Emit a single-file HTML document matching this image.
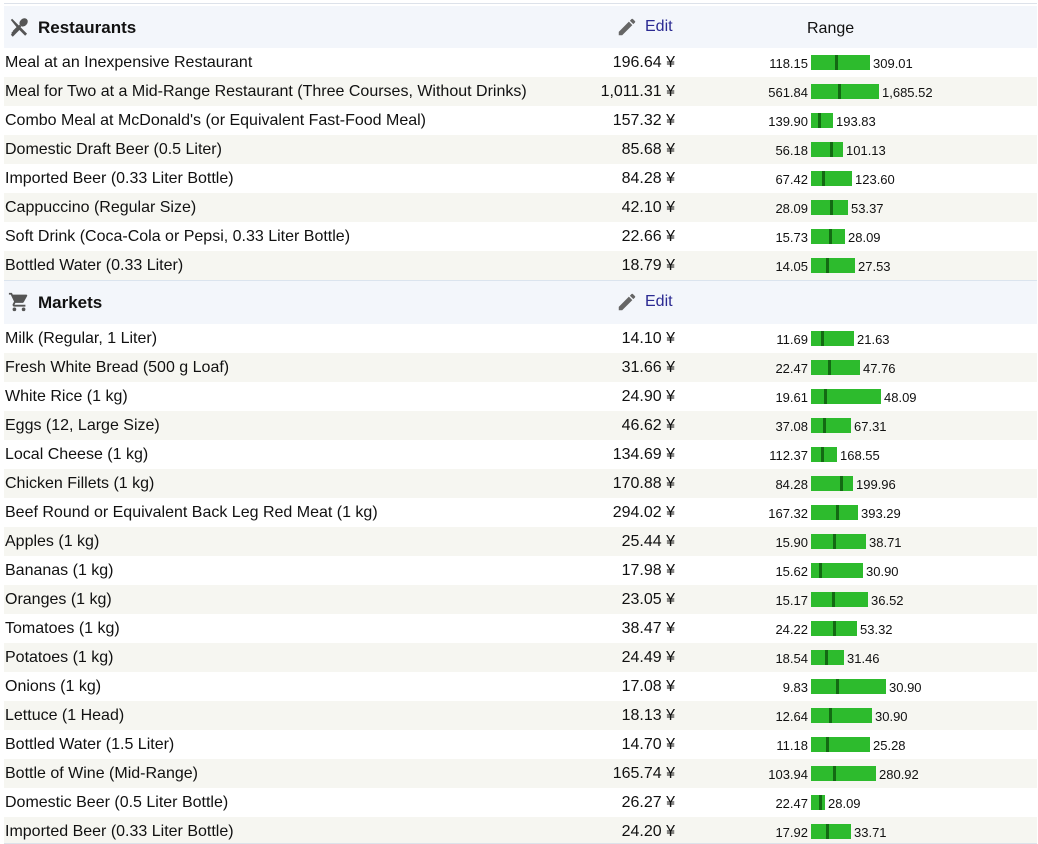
<!DOCTYPE html><html><head><meta charset="utf-8"><style>
body{margin:0;background:#fff;font-family:"Liberation Sans",Arial,sans-serif;color:#111;width:1038px;height:844px;overflow:hidden;position:relative}
.top{position:absolute;left:4px;top:3px;width:1033px;height:1px;background:#dde2ea}
.hd{position:absolute;left:4px;width:1033px;height:42px;background:#f3f6fb}
.hd .t{position:absolute;left:34px;top:12px;font-size:17px;font-weight:bold}
.hd .ic{position:absolute;left:4px;top:10px}
.hd .ed{position:absolute;left:612px;top:10px}
.hd .e{position:absolute;left:641px;top:12px;font-size:16px;color:#2b2a92}
.hd .r{position:absolute;left:803px;top:14px;font-size:16px}
.row{position:absolute;left:4px;width:1033px;height:29px;font-size:16px}
.row.g{background:#f6f6f1}
.n{position:absolute;left:1px;top:6px;white-space:nowrap}
.p{position:absolute;right:362px;top:6px;white-space:nowrap}
.lo{position:absolute;right:229px;top:8px;font-size:13px}
.bar{position:absolute;left:807px;top:7px;height:15px;background:#2dbb2d}
.bar i{position:absolute;top:0;width:3px;height:15px;background:#136a13}
.hi{position:absolute;top:8px;font-size:13px}
</style></head><body>
<div class="top"></div>
<div class="hd" style="top:6px">
<svg class="ic" width="22" height="22" viewBox="0 0 24 24"><path fill="#555" d="M13.2 14.6l-8 8-2.1-2.1 8-8zM3.1 4.4l1.4-1.4 16.3 16.4-2.1 2.1-8-8-4.2 4.2-1.4-1.4 4.2-4.2z"/><ellipse cx="17" cy="7" rx="4" ry="5" transform="rotate(45 17 7)" fill="#555"/><path fill="#555" d="M12.5 9.5l2 2-9 9-2-2z"/></svg>
<span class="t">Restaurants</span>
<svg class="ed" width="22" height="22" viewBox="0 0 24 24"><path fill="#666" d="M3 17.25V21h3.75L17.8 9.94l-3.75-3.75L3 17.25zM20.7 7.04a1 1 0 000-1.41l-2.34-2.34a1 1 0 00-1.41 0l-1.83 1.83 3.75 3.75 1.83-1.83z"/></svg>
<span class="e">Edit</span><span class="r">Range</span></div>

<div class="row" style="top:48px"><span class="n">Meal at an Inexpensive Restaurant</span><span class="p">196.64 ¥</span><span class="lo">118.15</span><div class="bar" style="width:59px"><i style="left:24px"></i></div><span class="hi" style="left:869px">309.01</span></div>
<div class="row g" style="top:77px"><span class="n">Meal for Two at a Mid-Range Restaurant (Three Courses, Without Drinks)</span><span class="p">1,011.31 ¥</span><span class="lo">561.84</span><div class="bar" style="width:68px"><i style="left:27px"></i></div><span class="hi" style="left:878px">1,685.52</span></div>
<div class="row" style="top:106px"><span class="n">Combo Meal at McDonald's (or Equivalent Fast-Food Meal)</span><span class="p">157.32 ¥</span><span class="lo">139.90</span><div class="bar" style="width:22px"><i style="left:7px"></i></div><span class="hi" style="left:832px">193.83</span></div>
<div class="row g" style="top:135px"><span class="n">Domestic Draft Beer (0.5 Liter)</span><span class="p">85.68 ¥</span><span class="lo">56.18</span><div class="bar" style="width:32px"><i style="left:19px"></i></div><span class="hi" style="left:842px">101.13</span></div>
<div class="row" style="top:164px"><span class="n">Imported Beer (0.33 Liter Bottle)</span><span class="p">84.28 ¥</span><span class="lo">67.42</span><div class="bar" style="width:41px"><i style="left:11px"></i></div><span class="hi" style="left:851px">123.60</span></div>
<div class="row g" style="top:193px"><span class="n">Cappuccino (Regular Size)</span><span class="p">42.10 ¥</span><span class="lo">28.09</span><div class="bar" style="width:37px"><i style="left:19px"></i></div><span class="hi" style="left:847px">53.37</span></div>
<div class="row" style="top:222px"><span class="n">Soft Drink (Coca-Cola or Pepsi, 0.33 Liter Bottle)</span><span class="p">22.66 ¥</span><span class="lo">15.73</span><div class="bar" style="width:34px"><i style="left:18px"></i></div><span class="hi" style="left:844px">28.09</span></div>
<div class="row g" style="top:251px"><span class="n">Bottled Water (0.33 Liter)</span><span class="p">18.79 ¥</span><span class="lo">14.05</span><div class="bar" style="width:44px"><i style="left:15px"></i></div><span class="hi" style="left:854px">27.53</span></div>

<div style="position:absolute;left:4px;top:280px;width:1033px;height:1px;background:#dbe4ee"></div>
<div class="hd" style="top:281px;height:43px">
<svg class="ic" width="22" height="22" viewBox="0 0 24 24"><path fill="#555" d="M7 18a2 2 0 100 4 2 2 0 000-4zM1 2v2h2l3.6 7.59-1.35 2.45C5.09 14.32 5 14.65 5 15a2 2 0 002 2h12v-2H7.42a.25.25 0 01-.25-.25l.03-.12.9-1.63h7.45c.75 0 1.41-.41 1.75-1.03l3.58-6.49A1 1 0 0020 4H5.21l-.94-2H1zm16 16a2 2 0 100 4 2 2 0 000-4z"/></svg>
<span class="t">Markets</span>
<svg class="ed" width="22" height="22" viewBox="0 0 24 24"><path fill="#666" d="M3 17.25V21h3.75L17.8 9.94l-3.75-3.75L3 17.25zM20.7 7.04a1 1 0 000-1.41l-2.34-2.34a1 1 0 00-1.41 0l-1.83 1.83 3.75 3.75 1.83-1.83z"/></svg>
<span class="e">Edit</span></div>

<div class="row" style="top:324px"><span class="n">Milk (Regular, 1 Liter)</span><span class="p">14.10 ¥</span><span class="lo">11.69</span><div class="bar" style="width:43px"><i style="left:10px"></i></div><span class="hi" style="left:853px">21.63</span></div>
<div class="row g" style="top:353px"><span class="n">Fresh White Bread (500 g Loaf)</span><span class="p">31.66 ¥</span><span class="lo">22.47</span><div class="bar" style="width:49px"><i style="left:17px"></i></div><span class="hi" style="left:859px">47.76</span></div>
<div class="row" style="top:382px"><span class="n">White Rice (1 kg)</span><span class="p">24.90 ¥</span><span class="lo">19.61</span><div class="bar" style="width:70px"><i style="left:13px"></i></div><span class="hi" style="left:880px">48.09</span></div>
<div class="row g" style="top:411px"><span class="n">Eggs (12, Large Size)</span><span class="p">46.62 ¥</span><span class="lo">37.08</span><div class="bar" style="width:40px"><i style="left:12px"></i></div><span class="hi" style="left:850px">67.31</span></div>
<div class="row" style="top:440px"><span class="n">Local Cheese (1 kg)</span><span class="p">134.69 ¥</span><span class="lo">112.37</span><div class="bar" style="width:26px"><i style="left:10px"></i></div><span class="hi" style="left:836px">168.55</span></div>
<div class="row g" style="top:469px"><span class="n">Chicken Fillets (1 kg)</span><span class="p">170.88 ¥</span><span class="lo">84.28</span><div class="bar" style="width:42px"><i style="left:29px"></i></div><span class="hi" style="left:852px">199.96</span></div>
<div class="row" style="top:498px"><span class="n">Beef Round or Equivalent Back Leg Red Meat (1 kg)</span><span class="p">294.02 ¥</span><span class="lo">167.32</span><div class="bar" style="width:47px"><i style="left:25px"></i></div><span class="hi" style="left:857px">393.29</span></div>
<div class="row g" style="top:527px"><span class="n">Apples (1 kg)</span><span class="p">25.44 ¥</span><span class="lo">15.90</span><div class="bar" style="width:55px"><i style="left:22px"></i></div><span class="hi" style="left:865px">38.71</span></div>
<div class="row" style="top:556px"><span class="n">Bananas (1 kg)</span><span class="p">17.98 ¥</span><span class="lo">15.62</span><div class="bar" style="width:52px"><i style="left:8px"></i></div><span class="hi" style="left:862px">30.90</span></div>
<div class="row g" style="top:585px"><span class="n">Oranges (1 kg)</span><span class="p">23.05 ¥</span><span class="lo">15.17</span><div class="bar" style="width:57px"><i style="left:21px"></i></div><span class="hi" style="left:867px">36.52</span></div>
<div class="row" style="top:614px"><span class="n">Tomatoes (1 kg)</span><span class="p">38.47 ¥</span><span class="lo">24.22</span><div class="bar" style="width:46px"><i style="left:22px"></i></div><span class="hi" style="left:856px">53.32</span></div>
<div class="row g" style="top:643px"><span class="n">Potatoes (1 kg)</span><span class="p">24.49 ¥</span><span class="lo">18.54</span><div class="bar" style="width:33px"><i style="left:14px"></i></div><span class="hi" style="left:843px">31.46</span></div>
<div class="row" style="top:672px"><span class="n">Onions (1 kg)</span><span class="p">17.08 ¥</span><span class="lo">9.83</span><div class="bar" style="width:75px"><i style="left:25px"></i></div><span class="hi" style="left:885px">30.90</span></div>
<div class="row g" style="top:701px"><span class="n">Lettuce (1 Head)</span><span class="p">18.13 ¥</span><span class="lo">12.64</span><div class="bar" style="width:61px"><i style="left:18px"></i></div><span class="hi" style="left:871px">30.90</span></div>
<div class="row" style="top:730px"><span class="n">Bottled Water (1.5 Liter)</span><span class="p">14.70 ¥</span><span class="lo">11.18</span><div class="bar" style="width:59px"><i style="left:15px"></i></div><span class="hi" style="left:869px">25.28</span></div>
<div class="row g" style="top:759px"><span class="n">Bottle of Wine (Mid-Range)</span><span class="p">165.74 ¥</span><span class="lo">103.94</span><div class="bar" style="width:65px"><i style="left:22px"></i></div><span class="hi" style="left:875px">280.92</span></div>
<div class="row" style="top:788px"><span class="n">Domestic Beer (0.5 Liter Bottle)</span><span class="p">26.27 ¥</span><span class="lo">22.47</span><div class="bar" style="width:14px"><i style="left:8px"></i></div><span class="hi" style="left:824px">28.09</span></div>
<div class="row g" style="top:817px;height:26px"><span class="n">Imported Beer (0.33 Liter Bottle)</span><span class="p">24.20 ¥</span><span class="lo">17.92</span><div class="bar" style="width:40px"><i style="left:15px"></i></div><span class="hi" style="left:850px">33.71</span></div>
<div style="position:absolute;left:4px;top:843px;width:1033px;height:1px;background:#dde2ea"></div>
</body></html>
